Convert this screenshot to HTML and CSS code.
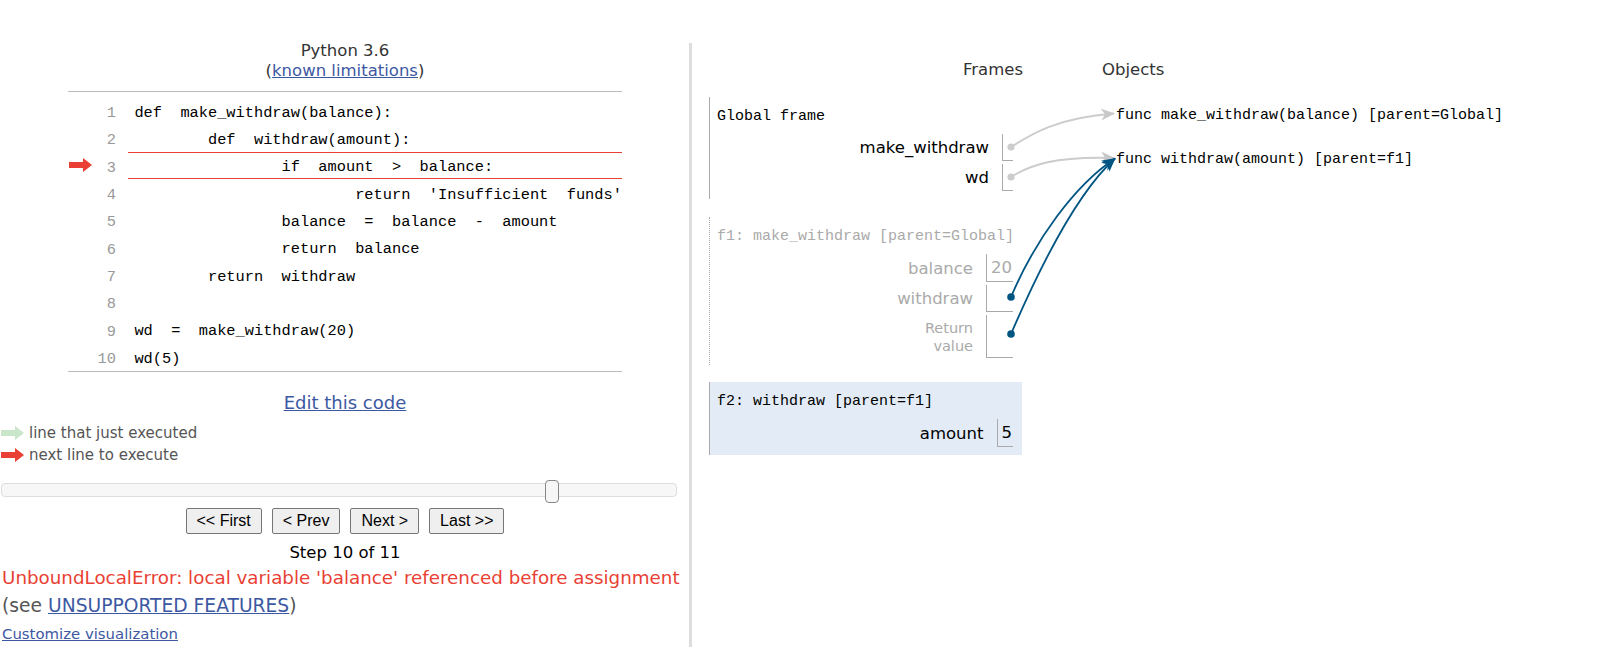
FILE: index.html
```html
<!DOCTYPE html>
<html>
<head>
<meta charset="utf-8">
<title>Python Tutor</title>
<link rel="stylesheet" href="styles.css">
</head>
<body>
<div class="page">
  <div class="left">
    <div class="lang">Python 3.6<br>(<a href="#">known limitations</a>)</div>
    <div class="code">
      <div class="row"><span class="gut"></span><span class="ln">1</span><span class="src">def  make_withdraw(balance):</span></div>
      <div class="row"><span class="gut"></span><span class="ln">2</span><span class="src">        def  withdraw(amount):</span></div>
      <div class="row cur"><span class="gut"><svg class="arr" width="23" height="14" viewBox="0 0 23 14"><path d="M0,4 H14 V0 L23,7 L14,14 V10 H0 Z" fill="#e93f34"/></svg></span><span class="ln">3</span><span class="src">                if  amount  &gt;  balance:</span></div>
      <div class="row"><span class="gut"></span><span class="ln">4</span><span class="src">                        return  'Insufficient  funds'</span></div>
      <div class="row"><span class="gut"></span><span class="ln">5</span><span class="src">                balance  =  balance  -  amount</span></div>
      <div class="row"><span class="gut"></span><span class="ln">6</span><span class="src">                return  balance</span></div>
      <div class="row"><span class="gut"></span><span class="ln">7</span><span class="src">        return  withdraw</span></div>
      <div class="row"><span class="gut"></span><span class="ln">8</span><span class="src"></span></div>
      <div class="row"><span class="gut"></span><span class="ln">9</span><span class="src">wd  =  make_withdraw(20)</span></div>
      <div class="row"><span class="gut"></span><span class="ln">10</span><span class="src">wd(5)</span></div>
    </div>
    <div class="edit"><a href="#">Edit this code</a></div>
    <div class="legend">
      <div class="leg"><svg class="arr" width="23" height="14" viewBox="0 0 23 14"><path d="M0,4 H14 V0 L23,7 L14,14 V10 H0 Z" fill="#c9e6ca"/></svg>line that just executed</div>
      <div class="leg"><svg class="arr" width="23" height="14" viewBox="0 0 23 14"><path d="M0,4 H14 V0 L23,7 L14,14 V10 H0 Z" fill="#e93f34"/></svg>next line to execute</div>
    </div>
    <div class="slider"><span class="handle" style="left:80.56%"></span></div>
    <div class="buttons">
      <button type="button">&lt;&lt; First</button>
      <button type="button">&lt; Prev</button>
      <button type="button">Next &gt;</button>
      <button type="button">Last &gt;&gt;</button>
    </div>
    <div class="step">Step 10 of 11</div>
    <div class="err">UnboundLocalError: local variable 'balance' referenced before assignment</div>
    <div class="see">(see <a href="#">UNSUPPORTED FEATURES</a>)</div>
    <div class="cust"><a href="#">Customize visualization</a></div>
  </div>
  <div class="divider"></div>
  <div class="right">
    <div class="hdr"><div class="hframes">Frames</div><div class="hobjs">Objects</div></div>
    <div class="viz">
      <div class="frames">
        <div class="frame global">
          <div class="ftitle">Global frame</div>
          <table class="vars">
            <tr><td class="vn">make_withdraw</td><td class="vv ptr"></td></tr>
            <tr><td class="vn">wd</td><td class="vv ptr"></td></tr>
          </table>
        </div>
        <div class="frame zombie">
          <div class="ftitle">f1: make_withdraw [parent=Global]</div>
          <table class="vars">
            <tr><td class="vn">balance</td><td class="vv">20</td></tr>
            <tr><td class="vn">withdraw</td><td class="vv ptr"></td></tr>
            <tr><td class="vn rv">Return<br>value</td><td class="vv ptr"></td></tr>
          </table>
        </div>
        <div class="frame hl">
          <div class="ftitle">f2: withdraw [parent=f1]</div>
          <table class="vars">
            <tr><td class="vn">amount</td><td class="vv">5</td></tr>
          </table>
        </div>
      </div>
      <div class="objs">
        <div class="obj o1">func make_withdraw(balance) [parent=Global]</div>
        <div class="obj o2">func withdraw(amount) [parent=f1]</div>
      </div>
    </div>
  </div>
</div>
<svg class="arrows" width="1609" height="658" viewBox="0 0 1609 658">
  <defs>
    <marker id="mg" markerUnits="userSpaceOnUse" markerWidth="14" markerHeight="12" viewBox="0 0 14 12" refX="13" refY="6" orient="auto"><path d="M0,0 L14,6 L0,12 L4,6 Z" fill="#c8c8c8"/></marker>
    <marker id="mb" markerUnits="userSpaceOnUse" markerWidth="14" markerHeight="12" viewBox="0 0 14 12" refX="13" refY="6" orient="auto"><path d="M0,0 L14,6 L0,12 L4,6 Z" fill="#005583"/></marker>
  </defs>
  <path d="M1011,147 C1030,135 1055,118 1114,113.5" fill="none" stroke="#cccccc" stroke-width="1.8" marker-end="url(#mg)"/>
  <path d="M1011,177 C1030,165 1055,156 1114,158" fill="none" stroke="#cccccc" stroke-width="1.8" marker-end="url(#mg)"/>
  <circle cx="1011" cy="147" r="3.6" fill="#cccccc"/>
  <circle cx="1011" cy="177" r="3.6" fill="#cccccc"/>
  <path d="M1011,297 C1035,240 1075,185 1115,158.5" fill="none" stroke="#005583" stroke-width="1.8" marker-end="url(#mb)"/>
  <path d="M1011,334 C1045,255 1080,190 1115,158.5" fill="none" stroke="#005583" stroke-width="1.8" marker-end="url(#mb)"/>
  <circle cx="1011" cy="297" r="3.8" fill="#005583"/>
  <circle cx="1011" cy="334" r="3.8" fill="#005583"/>
</svg>
</body>
</html>
```

FILE: styles.css
```css
html, body {
  margin: 0;
  padding: 0;
}
body {
  font-family: "DejaVu Sans", Verdana, sans-serif;
  background: #ffffff;
  color: #000;
  position: relative;
  width: 1609px;
  height: 658px;
  overflow: hidden;
}
a {
  color: #3d58a2;
  text-decoration: underline;
}
.page {
  display: flex;
  align-items: flex-start;
}
.left {
  width: 689px;
  flex: none;
  padding-left: 1px;
  box-sizing: border-box;
}
.lang {
  margin-top: 41px;
  text-align: center;
  font-size: 16.5px;
  line-height: 20px;
  color: #333;
}
.code {
  width: 554px;
  margin: 10px auto 0;
  border-top: 1px solid #bbb;
  border-bottom: 1px solid #bbb;
  padding: 5px 0 1px;
}
.row {
  display: flex;
  align-items: center;
  height: 27.3px;
}
.gut {
  width: 25px;
  flex: none;
  display: flex;
  align-items: center;
  padding-left: 1px;
  box-sizing: border-box;
}
.arr {
  display: block;
  flex: none;
}
.ln {
  width: 27px;
  flex: none;
  text-align: right;
  padding-right: 4px;
  padding-top: 5px;
  box-sizing: border-box;
  font-family: "Liberation Mono", monospace;
  font-size: 15.33px;
  color: #999;
}
.src {
  margin-left: 8px;
  flex: 1;
  height: 100%;
  box-sizing: border-box;
  padding-left: 6.4px;
  padding-top: 5px;
  font-family: "Liberation Mono", monospace;
  font-size: 15.33px;
  line-height: 22.3px;
  white-space: pre;
  color: #000;
}
.cur .src {
  border-top: 1px solid #e93f34;
  border-bottom: 1px solid #e93f34;
  padding-top: 4px;
  line-height: 21.3px;
}
.edit {
  margin-top: 20px;
  text-align: center;
  font-size: 18px;
  line-height: 22px;
}
.legend {
  margin-top: 8px;
  font-size: 15px;
  line-height: 22px;
  color: #555;
}
.leg {
  display: flex;
  align-items: center;
}
.leg .arr {
  margin-right: 5px;
}
.slider {
  margin-top: 17px;
  width: 676px;
  height: 14px;
  box-sizing: border-box;
  border: 1px solid #dddddd;
  border-radius: 4px;
  background: #f7f7f7;
  position: relative;
}
.handle {
  position: absolute;
  top: -4px;
  width: 14px;
  height: 23px;
  box-sizing: border-box;
  border: 1px solid #888;
  border-radius: 4px;
  background: #f6f6f6;
}
.buttons {
  margin-top: 11px;
  display: flex;
  justify-content: center;
  gap: 10px;
}
.buttons button {
  font-family: "Liberation Sans", Arial, sans-serif;
  font-size: 16px;
  line-height: 18px;
  height: 26px;
  padding: 3px 10px;
  border: 1px solid #767676;
  border-radius: 2px;
  background: #efefef;
  color: #000;
}
.step {
  margin-top: 8px;
  text-align: center;
  font-size: 16.5px;
  line-height: 22px;
}
.err {
  font-size: 18.3px;
  line-height: 28px;
  color: #e93f34;
  padding-left: 1px;
  white-space: nowrap;
}
.see {
  font-size: 18.7px;
  line-height: 28px;
  color: #555;
  padding-left: 1px;
}
.cust {
  font-size: 14.9px;
  line-height: 28px;
  padding-left: 1px;
}
.divider {
  width: 3px;
  flex: none;
  background: #dddddd;
  margin-top: 43px;
  height: 604px;
}
.right {
  padding: 59px 0 0 17px;
}
.hdr {
  display: flex;
  font-size: 16.5px;
  line-height: 22px;
  color: #333;
}
.hframes {
  width: 314px;
  text-align: right;
}
.hobjs {
  margin-left: 79px;
}
.viz {
  display: flex;
  align-items: flex-start;
  margin-top: 16px;
}
.frames {
  width: 313px;
  flex: none;
}
.objs {
  margin-left: 80px;
  padding-left: 14px;
}
.obj {
  font-family: "Liberation Mono", monospace;
  font-size: 15px;
  line-height: 20px;
  white-space: nowrap;
}
.o1 {
  margin-top: 8.5px;
}
.o2 {
  margin-top: 24.5px;
}
.frame {
  border-left: 1px solid #aaa;
  padding: 2px 7px 5px 7px;
  margin-bottom: 17px;
}
.frame.global {
  margin-bottom: 18px;
}
.frame.zombie {
  border-left: 1px dotted #aaa;
  color: #aaa;
  padding-bottom: 4px;
}
.frame.hl {
  background: #e2ebf6;
}
.ftitle {
  font-family: "Liberation Mono", monospace;
  font-size: 15px;
  line-height: 22px;
  margin: 7px 0 3px;
  white-space: nowrap;
}
.vars {
  margin-left: auto;
  margin-top: 3px;
  border-collapse: separate;
  border-spacing: 2px 3px;
}
.vn {
  text-align: right;
  padding: 4px 11px 4px 0;
  font-size: 16.5px;
  line-height: 19px;
  white-space: nowrap;
  vertical-align: middle;
}
.vn.rv {
  font-size: 14.5px;
  line-height: 18px;
  padding: 3.5px 11px 3.5px 0;
}
.vv {
  border-left: 1px solid #aaa;
  border-bottom: 1px solid #aaa;
  padding: 4px 1px 4px 4px;
  font-size: 16.5px;
  line-height: 19px;
  vertical-align: middle;
}
.vv.ptr {
  width: 5px;
}
.arrows {
  position: absolute;
  top: 0;
  left: 0;
  pointer-events: none;
}
```
